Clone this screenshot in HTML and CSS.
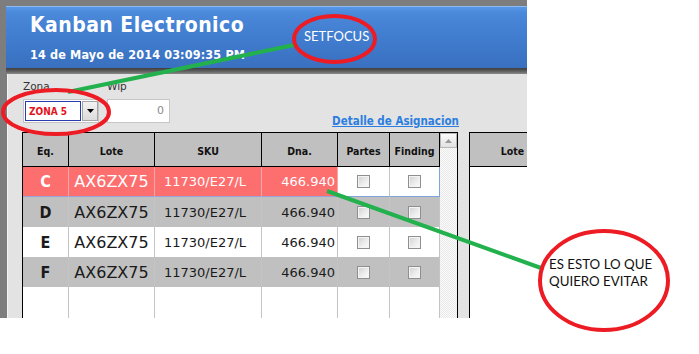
FILE: index.html
```html
<!DOCTYPE html>
<html lang="es">
<head>
<meta charset="utf-8">
<title>Kanban Electronico</title>
<link rel="stylesheet" href="styles.css">
</head>
<body>
<div class="screen">
  <div class="app">
    <header class="bar">
      <h1 class="title">Kanban Electronico</h1>
      <div class="date">14 de Mayo de 2014 03:09:35 PM</div>
    </header>
    <div class="shadow"></div>
    <main class="panel">
      <div class="toolbar">
        <div class="fields">
          <span class="lbl">Zona</span>
          <span class="lbl">Wip</span>
          <div class="select">
            <span class="select-val"><span class="select-text">ZONA 5</span></span>
            <span class="select-btn"><svg width="7" height="4" viewBox="0 0 7 4"><path d="M0 0h7L3.5 4z" fill="#000"/></svg></span>
          </div>
          <div class="input">0</div>
        </div>
        <a class="link" href="#">Detalle de Asignacion</a>
      </div>
      <div class="tables">
        <div class="grid">
          <div class="cols">
            <div class="row head">
              <div class="cell">Eq.</div>
              <div class="cell">Lote</div>
              <div class="cell">SKU</div>
              <div class="cell">Dna.</div>
              <div class="cell">Partes</div>
              <div class="cell">Finding</div>
            </div>
            <div class="row sel">
              <div class="cell eq">C</div>
              <div class="cell lote">AX6ZX75</div>
              <div class="cell sku">11730/E27/L</div>
              <div class="cell dna">466.940</div>
              <div class="cell chk"><span class="cb"></span></div>
              <div class="cell chk"><span class="cb"></span></div>
            </div>
            <div class="row alt">
              <div class="cell eq">D</div>
              <div class="cell lote">AX6ZX75</div>
              <div class="cell sku">11730/E27/L</div>
              <div class="cell dna">466.940</div>
              <div class="cell chk"><span class="cb"></span></div>
              <div class="cell chk"><span class="cb"></span></div>
            </div>
            <div class="row">
              <div class="cell eq">E</div>
              <div class="cell lote">AX6ZX75</div>
              <div class="cell sku">11730/E27/L</div>
              <div class="cell dna">466.940</div>
              <div class="cell chk"><span class="cb"></span></div>
              <div class="cell chk"><span class="cb"></span></div>
            </div>
            <div class="row alt">
              <div class="cell eq">F</div>
              <div class="cell lote">AX6ZX75</div>
              <div class="cell sku">11730/E27/L</div>
              <div class="cell dna">466.940</div>
              <div class="cell chk"><span class="cb"></span></div>
              <div class="cell chk"><span class="cb"></span></div>
            </div>
            <div class="row filler">
              <div class="cell"></div><div class="cell"></div><div class="cell"></div>
              <div class="cell"></div><div class="cell"></div><div class="cell"></div>
            </div>
          </div>
          <div class="scroll">
            <div class="scroll-up"><svg width="7" height="4" viewBox="0 0 7 4"><path d="M0 4h7L3.5 0z" fill="#9a9a9a"/></svg></div>
          </div>
        </div>
        <div class="grid2">
          <div class="row2 head">
            <div class="cell">Lote</div>
            <div class="cell"></div>
          </div>
        </div>
      </div>
    </main>
  </div>

  <svg class="marks" width="699" height="354" viewBox="0 0 699 354">
    <line x1="294" y1="45" x2="68" y2="92" stroke="#22b14c" stroke-width="4"/>
    <line x1="327" y1="191" x2="541" y2="268" stroke="#22b14c" stroke-width="4"/>
    <ellipse cx="334.5" cy="39" rx="40.5" ry="23" fill="none" stroke="#ed1c24" stroke-width="4"/>
    <ellipse cx="56" cy="112" rx="53" ry="22" fill="none" stroke="#ed1c24" stroke-width="4"/>
    <ellipse cx="604" cy="280.5" rx="64" ry="49.5" fill="none" stroke="#ed1c24" stroke-width="4"/>
  </svg>
  <div class="note note-focus">SETFOCUS</div>
  <div class="note note-evitar">ES ESTO LO QUE<br>QUIERO EVITAR</div>
</div>
</body>
</html>
```
FILE: styles.css
```css
* { box-sizing: border-box; }
html, body { margin: 0; padding: 0; }
body {
  background: #fff;
  font-family: "DejaVu Sans", sans-serif;
}
.screen {
  position: relative;
  width: 699px;
  height: 354px;
  overflow: hidden;
}
.app {
  width: 527px;
  height: 318px;
  background: #7d7d7d;
  padding: 6px 0 0 6px;
  display: flex;
  flex-direction: column;
  overflow: hidden;
}
.bar {
  height: 62px;
  flex: none;
  background: linear-gradient(#5797e6 0, #4a88da 10%, #3f7acc 60%, #3a70c0 100%);
  border-top: 1px solid #8dbaf0;
  padding: 6px 0 0 24px;
  color: #fff;
}
.title {
  margin: 0;
  font-family: "DejaVu Sans Condensed", "DejaVu Sans", sans-serif;
  font-weight: bold;
  font-size: 21px;
  line-height: 24px;
  letter-spacing: 0.45px;
}
.date {
  margin-top: 10px;
  font-family: "DejaVu Sans Condensed", "DejaVu Sans", sans-serif;
  font-weight: bold;
  font-size: 12.5px;
  line-height: 15px;
  letter-spacing: 0.15px;
}
.shadow {
  height: 6px;
  flex: none;
  background: linear-gradient(#3e3e3e, #5c5c5c 50%, #8a8a8a);
}
.panel {
  flex: 1;
  margin-left: 1px;
  background: #e3e3e3;
  border-left: 1px solid #f3f3f3;
  padding: 6px 0 0 14px;
  overflow: hidden;
}
.toolbar {
  display: flex;
  align-items: flex-end;
  justify-content: space-between;
  width: 437px;
}
.fields {
  display: grid;
  grid-template-columns: 76px 63px;
  column-gap: 8px;
  row-gap: 6px;
  margin-left: 1px;
}
.lbl {
  font-size: 10.5px;
  line-height: 13px;
  color: #333;
}
.select {
  height: 24px;
  display: flex;
  border: 1px solid #c3c3c3;
  background: #fff;
}
.select-val {
  flex: 1;
  padding: 1px;
  display: flex;
}
.select-text {
  flex: 1;
  display: flex;
  align-items: center;
  padding-left: 3px;
  border: 1px dotted #14229a;
  outline: 1px solid #2a3bb0;
  outline-offset: -1px;
  font-family: "DejaVu Sans Condensed", "DejaVu Sans", sans-serif;
  font-weight: bold;
  font-size: 10px;
  color: #e4121c;
}
.select-btn {
  width: 16px;
  margin: 1px 0;
  display: flex;
  align-items: center;
  justify-content: center;
  background: linear-gradient(#f2f2f2, #dcdcdc);
  border: 1px solid #a5a5a5;
}
.input {
  height: 24px;
  border: 1px solid #c6c6c6;
  background: #fff;
  text-align: right;
  padding: 4px 5px 0 0;
  font-size: 11px;
  color: #8a8a8a;
}
.link {
  margin-bottom: -5px;
  font-family: "DejaVu Sans Condensed", "DejaVu Sans", sans-serif;
  font-weight: bold;
  font-size: 11.5px;
  line-height: 14px;
  color: #2b7ee0;
  text-decoration: underline;
}
.tables {
  display: flex;
  gap: 11px;
  margin-top: 9px;
}
.grid {
  width: 436px;
  height: 200px;
  flex: none;
  display: flex;
  border: 1px solid #000;
  border-bottom: 0;
}
.cols {
  width: 417px;
  display: flex;
  flex-direction: column;
}
.row {
  display: grid;
  grid-template-columns: 46px 86px 107px 76px 52px 50px;
  height: 30px;
  background: #fff;
  color: #1a1a1a;
}
.row.alt { background: #c0c0c0; }
.cell {
  border-right: 1px solid #c4c4c4;
  display: flex;
  align-items: center;
  justify-content: center;
}
.row.head {
  height: 34px;
  background: #c0c0c0;
}
.head .cell {
  border-right: 1px solid #000;
  border-bottom: 1px solid #000;
  padding-top: 2px;
  font-family: "DejaVu Sans Condensed", "DejaVu Sans", sans-serif;
  font-weight: bold;
  font-size: 10.5px;
  color: #111;
}
.eq {
  font-family: "DejaVu Sans Condensed", "DejaVu Sans", sans-serif;
  font-weight: bold;
  font-size: 16px;
}
.lote { font-size: 16px; }
.sku {
  font-size: 13px;
  justify-content: flex-start;
  padding-left: 9px;
}
.dna {
  font-size: 13px;
  justify-content: flex-end;
  padding-right: 2px;
}
.row.sel .cell {
  background: #fd6e6e;
  color: #fff;
  border-right-color: #f6a8a8;
  border-bottom: 1px solid #9aa3d8;
}
.row.sel .cell.chk {
  background: #fff;
  border-right-color: #c4c4c4;
  border-bottom-color: #7ea5da;
}
.row.sel .cell.chk:last-child { border-right-color: #7ea5da; }
.cb {
  width: 13px;
  height: 13px;
  border: 1px solid #8e8f8f;
  background: linear-gradient(135deg, #cfcfcf, #ececec 55%, #fbfbfb);
  box-shadow: inset 0 0 0 1px #f4f4f4;
}
.row.filler { height: 40px; }
.scroll {
  width: 17px;
  background: repeating-conic-gradient(#e9e9e9 0 25%, #fbfbfb 0 50%) 0 0 / 2px 2px;
}
.scroll-up {
  height: 15px;
  border: 1px solid #b8b8b8;
  background: linear-gradient(#fafafa, #e2e2e2);
  display: flex;
  align-items: center;
  justify-content: center;
}
.grid2 {
  width: 180px;
  height: 200px;
  flex: none;
  border-left: 1px solid #000;
  border-top: 1px solid #000;
  background: #fff;
}
.row2 {
  display: grid;
  grid-template-columns: 86px 86px;
  height: 34px;
  background: #c0c0c0;
}
.marks {
  position: absolute;
  left: 0;
  top: 0;
  pointer-events: none;
}
.note {
  position: absolute;
  font-family: Lato, "Open Sans", sans-serif;
  white-space: nowrap;
}
.note-focus {
  left: 304px;
  top: 28px;
  font-size: 13px;
  line-height: 16px;
  color: #fff;
}
.note-evitar {
  left: 549px;
  top: 256px;
  font-size: 13.3px;
  line-height: 17px;
  color: #111;
}
```
